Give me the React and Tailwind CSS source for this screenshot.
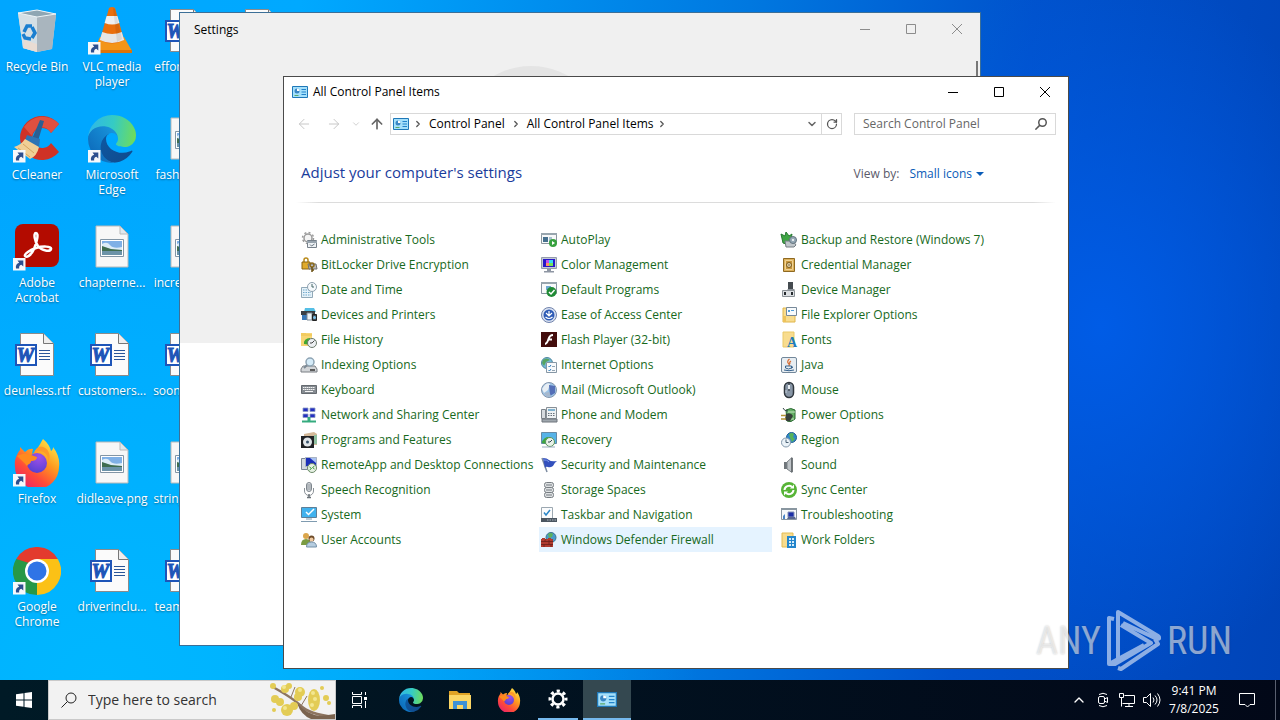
import {
    ArrowLeft,
    ArrowRight,
    ArrowUp,
    ChevronDown,
    ChevronRight,
    ChevronUp,
    RotateCw,
} from 'lucide-react';

/* ---------- Desktop icons (48x48) ---------- */

const Shortcut = () => (
    <g>
        <path d="M0 35h12.500v12.500H0z" fill="#f6f8fb" />
        <path
            d="M3 45.500c-.6-3 .6-5.200 3.200-5.800L4.500 37.500H10.300V43.500L8.300 41.800C6.500 42.300 5.900 43.600 6.200 45.500z"
            fill="#2d4f8f"
        />
    </g>
);

const RecycleBin = () => (
    <>
        <path d="M5 6 24 3l19 4-4 35-15 3-14-4z" fill="#c9d3da" />
        <path d="M5 6l19 3v36l-14-4z" fill="#d5dfe5" />
        <path d="M24 9l19-2-4 35-15 3z" fill="#a9b5be" />
        <path d="M5 6 24 3l19 4-19 3z" fill="#8fa6b3" stroke="#eef4f7" />
        <path d="M11 33l13 4v8l-14-4z" fill="#e9dcd3" />
        <g fill="none" stroke="#1b7fd0" strokeWidth="3.500">
            <path d="M11 25l3-6h5" />
            <path d="M19 20l3 6-3 5" />
            <path d="M18 32l-6-1-2-4" />
        </g>
    </>
);

const VlcCone = () => (
    <>
        <path d="M12 30h24l8 14-1 2H7l-1-2z" fill="#f39518" />
        <path d="M6 43h38v3H6z" fill="#dd7408" />
        <path d="M21 1q3-2 6 0l9 32q-12 7-24 0z" fill="#ea6f0c" />
        <path d="M18.600 9h10.800l2 7q-7 3-14.800 0z" fill="#efefef" />
        <path d="M14.200 25q10 4 19.600 0l2.400 8q-12 6-24.400 0z" fill="#e6e6e6" />
        <path d="M25 1l2 1 7 30-5 3z" fill="#000" opacity=".08" />
    </>
);

const CCleaner = () => (
    <>
        <path d="M46 9A22 22 0 1 0 46 37l-8-9a10 10 0 1 1 0-10z" fill="#cf3226" />
        <path d="M46 9A22 22 0 0 0 11 12l8 9a10 10 0 0 1 19-3z" fill="#e0503f" />
        <path d="M27 5l4 1-6 20-6-2z" fill="#2a5f93" />
        <path d="M14 20l13 4-1 9-14-8z" fill="#2d74b5" />
        <path d="M12 24l14 8q-2 9-9 12L1 32q7-2 11-8z" fill="#f0cf96" />
        <path d="M5 33l12 9M10 29l11 9" stroke="#d6a55f" />
    </>
);

const EdgeArt = () => (
    <g transform="scale(.1875)">
        <defs>
            <linearGradient id="edgeDark" x1="0" x2="1" y1="0" y2="1">
                <stop offset="0" stopColor="#0c59a4" />
                <stop offset="1" stopColor="#114a8b" />
            </linearGradient>
            <linearGradient id="edgeBlue" x1="1" x2="0" y1="0" y2="1">
                <stop offset="0" stopColor="#1b9de2" />
                <stop offset="1" stopColor="#0a62b4" />
            </linearGradient>
            <linearGradient id="edgeGreen" x1="0" x2="1" y1=".5" y2=".6">
                <stop offset="0" stopColor="#2fb7e8" />
                <stop offset=".5" stopColor="#35cbc4" />
                <stop offset="1" stopColor="#6fdc5a" />
            </linearGradient>
        </defs>
        <path
            fill="url(#edgeDark)"
            d="M231 190.500c-3.400 1.800-6.900 3.400-10.500 4.700a101.900 101.900 0 0 1-35.900 6.500c-47.300 0-88.500-32.500-88.500-74.300a31.500 31.500 0 0 1 16.400-27.300c-42.800 1.800-53.800 46.400-53.800 72.500 0 73.900 68.100 81.400 82.800 81.400 7.900 0 19.800-2.300 27-4.600l1.300-.4a128.300 128.300 0 0 0 66.600-52.800 4 4 0 0 0-5.400-5.700z"
        />
        <path
            fill="url(#edgeBlue)"
            d="M105.700 241.400a79.200 79.200 0 0 1-22.700-21.300 80.700 80.700 0 0 1 29.500-120c3.200-1.500 8.500-4.100 15.600-4a32.400 32.400 0 0 1 25.700 13 31.900 31.900 0 0 1 6.300 18.700c0-.2 24.500-79.600-80-79.600-43.900 0-80 41.600-80 78.200a130.200 130.200 0 0 0 12.100 56 128 128 0 0 0 156.400 67 75.500 75.500 0 0 1-62.800-8z"
        />
        <path
            fill="url(#edgeGreen)"
            d="M152.300 148.900c-.9 1-3.300 2.500-3.300 5.700 0 2.600 1.700 5.100 4.700 7.200 14.400 10 41.500 8.700 41.600 8.700 10.600 0 21.100-2.900 30.300-8.300a61.600 61.600 0 0 0 30.400-53.100c.3-22.400-8-37.300-11.300-43.900C223.500 23.900 177.700 0 128 0A128 128 0 0 0 0 126.200c.5-36.500 36.800-66 80-66 3.500 0 23.500.3 42 10.100 16.300 8.600 24.900 18.900 30.900 29.200 6.200 10.700 7.300 24.100 7.300 29.500 0 5.300-2.700 13.300-7.900 19.900z"
        />
    </g>
);

const Acrobat = () => (
    <>
        <rect x="2" y="1" width="44" height="43" rx="8" fill="#b30b00" />
        <path
            d="M23 10c-3 0-1 9 2 13 4 5 12 6 13 3s-9-3-15-1-12 6-11 8 6 0 9-7 5-16 2-16z"
            fill="none"
            stroke="#fff"
            strokeWidth="2.500"
        />
    </>
);

const ImageFile = () => (
    <>
        <path d="M8 3h24l8 8v33H8z" fill="#f7f7f7" stroke="#b9b9b9" />
        <path d="M32 3v8h8z" fill="#dfe8ee" stroke="#b9b9b9" />
        <path d="M12.500 16.500h23v17h-23z" fill="#fff" stroke="#8295a5" />
        <path d="M14 18h20v7H14z" fill="#7fb0e6" />
        <path d="M14 21q5-3 8 1t12 2v3H14z" fill="#dcecf7" />
        <path d="M14 23l9 3 11 1v2H14z" fill="#3f6d50" />
        <path d="M14 28h20v4H14z" fill="#6c93a8" />
    </>
);

const WordFile = () => (
    <>
        <path d="M7.500 2.500h23l10 10v32h-33z" fill="#fbfbfb" stroke="#8b8b8b" />
        <path d="M30.500 2.500v10h10" fill="#eee" stroke="#777" />
        <path d="M26 19.500h11M26 22.500h11M26 25.500h11M26 28.500h11" stroke="#2a5699" />
        <path d="M3 14h20v20H3z" fill="#fff" stroke="#1e55b8" strokeWidth="2" />
        <text
            x="12.500"
            y="31"
            fontSize="20"
            fontStyle="italic"
            fontWeight="700"
            textAnchor="middle"
            fill="#1e55b8"
            stroke="#1e55b8"
            className="font-['Liberation_Serif',serif]"
        >
            W
        </text>
    </>
);

const FirefoxArt = () => (
    <>
        <defs>
            <linearGradient id="ffBody" x1=".9" x2=".2" y1="0" y2="1">
                <stop offset="0" stopColor="#fff44f" />
                <stop offset=".4" stopColor="#ff9a1f" />
                <stop offset=".7" stopColor="#ff4b38" />
                <stop offset="1" stopColor="#e8206d" />
            </linearGradient>
            <radialGradient id="ffGlobe" cx=".6" cy=".2" r=".9">
                <stop offset="0" stopColor="#a050e8" />
                <stop offset="1" stopColor="#4f3fd0" />
            </radialGradient>
        </defs>
        <path
            d="M30 0c5 4 7 8 8 12 2-1 2-3 2-4 5 6 7 14 6 20a22 22 0 0 1-44 0C1 21 4 15 7 11v-3l5 5q4-4 8-3l-1 5c3-1 7-8 11-15z"
            fill="url(#ffBody)"
        />
        <circle cx="24" cy="24" r="10" fill="url(#ffGlobe)" />
        <path
            d="M4 17c5-3 11-2 14-1l6 2c0 3-3 4-6 4 0 3-3 3-4 5-3-4-7-7-10-10z"
            fill="#ff8a1d"
        />
        <path d="M21 13c8-3 15 2 14 10 4-6 0-14-5-15s-7 2-9 5z" fill="#ff9a2a" />
    </>
);

const ChromeArt = () => (
    <>
        <path d="M24 24 3.200 12A24 24 0 0 1 44.800 12z" fill="#e33b2e" />
        <path d="M24 24 44.800 12A24 24 0 0 1 24 48z" fill="#fbc116" />
        <path d="M24 24 24 48A24 24 0 0 1 3.200 12z" fill="#279847" />
        <path d="M24 12h20.800L34 30z" fill="#fbc116" />
        <path d="M24 48l10.400-18-10.400 6z" fill="#fbc116" />
        <path d="M3.200 12l10.400 18L16 16z" fill="#279847" />
        <circle cx="24" cy="24" r="12" fill="#fff" />
        <circle cx="24" cy="24" r="9.500" fill="#2f74e6" />
    </>
);

const desktopItems = [
    { label: 'Recycle Bin', Art: RecycleBin },
    { label: 'CCleaner', Art: CCleaner, shortcut: true },
    { label: 'Adobe Acrobat', Art: Acrobat, shortcut: true },
    { label: 'deunless.rtf', Art: WordFile },
    { label: 'Firefox', Art: FirefoxArt, shortcut: true },
    { label: 'Google Chrome', Art: ChromeArt, shortcut: true },
    { label: 'VLC media player', Art: VlcCone, shortcut: true },
    { label: 'Microsoft Edge', Art: EdgeArt, shortcut: true },
    { label: 'chapterne...', Art: ImageFile },
    { label: 'customers...', Art: WordFile },
    { label: 'didleave.png', Art: ImageFile },
    { label: 'driverinclu...', Art: WordFile },
    { label: 'effortma.rtf', Art: WordFile },
    { label: 'fashionpr...', Art: ImageFile },
    { label: 'increasein...', Art: ImageFile },
    { label: 'soonhow.rtf', Art: WordFile },
    { label: 'stringat.png', Art: ImageFile },
    { label: 'teambac.rtf', Art: WordFile },
    { label: 'younger.rtf', Art: WordFile },
];

/* ---------- Control panel icons (16x16) ---------- */

const glyphs = {
    admin: (
        <>
            <circle cx="7" cy="6" r="4" fill="#f4f4f4" stroke="#9a9a9a" strokeWidth="1.500" />
            <circle cx="7" cy="6" r="5.500" fill="none" stroke="#9a9a9a" strokeWidth="1.500" strokeDasharray="2 2.300" />
            <path d="M6.500 8.500h9v7h-9z" fill="#eef2f5" stroke="#76808a" />
            <path d="M6 9h10v2H6z" fill="#98a4ae" />
            <path d="M9 12.500l1.500 1.500 3-2" stroke="#6b7782" fill="none" />
        </>
    ),
    bitlocker: (
        <>
            <path d="M3 5V3a2 2 0 0 1 4 0v2" fill="none" stroke="#b98b1c" strokeWidth="1.500" />
            <path d="M1 5h8v7H1z" fill="#e0aa2a" stroke="#8a6410" />
            <path d="M7 7h8l1 5H8z" fill="#bcbcbc" stroke="#707070" />
            <circle cx="11" cy="8" r="2" fill="none" stroke="#8a6a1c" strokeWidth="1.500" />
            <path d="M11 10v5M11 13h2" stroke="#6b5012" strokeWidth="1.500" />
        </>
    ),
    date: (
        <>
            <path d="M.5 5.500h11v10H.5z" fill="#e6f2f9" stroke="#91a9b8" />
            <path d="M2 8h8M2 10.500h8M2 13h8" stroke="#6fa8cc" strokeDasharray="1.500 1" />
            <circle cx="11" cy="5" r="4.500" fill="#f5f9fc" stroke="#8da0ae" />
            <path d="M11 2v3h2" stroke="#466" fill="none" />
        </>
    ),
    devices: (
        <>
            <path d="M4 1h9l2 4H3z" fill="#55bfe6" />
            <path d="M0 4h14v4H0z" fill="#3a3f45" />
            <path d="M1 8h5v5H1z" fill="#3978b8" />
            <path d="M6 6h5v7H6z" fill="#eef3f7" stroke="#7e8b96" />
            <path d="M11.500 7.500h4v6h-4z" fill="#444a52" stroke="#222" />
            <circle cx="13.500" cy="10.500" r="1.500" fill="#7dc4ef" />
        </>
    ),
    history: (
        <>
            <path d="M0 1h11v13H0z" fill="#f7d675" />
            <path d="M0 1h5v1h6v2H0z" fill="#f2cb60" />
            <path d="M3 12a6 5 0 0 1 6-6v2.500a3 3 0 0 0-2 4z" fill="#42a832" />
            <circle cx="11" cy="11" r="4.500" fill="#eceff2" stroke="#6c7a6c" />
            <path d="M11 11l2.500-2.500M11 11H9" stroke="#444" />
        </>
    ),
    indexing: (
        <>
            <path d="M2 9h12l2 3v3H0v-3z" fill="#d2d5d8" stroke="#7a7f84" />
            <path d="M9 13h5" stroke="#333" strokeWidth="1.500" />
            <circle cx="9" cy="5" r="4" fill="#d5ebf8" stroke="#8ea4b4" strokeWidth="1.500" />
            <path d="M6 8l-3 3" stroke="#7c8a95" strokeWidth="2" />
        </>
    ),
    keyboard: (
        <>
            <path d="M.5 3.500h15v8H.5z" fill="#858b91" stroke="#666b70" />
            <path d="M2 5.500h12M2 7.500h12" stroke="#f4f4f4" strokeDasharray="1.500 .5" />
            <path d="M4 9.500h8" stroke="#f4f4f4" />
        </>
    ),
    network: (
        <>
            <g fill="#2430c0" stroke="#8c9ac4" strokeWidth=".8">
                <path d="M2 1h5v3.500H2zM9 1h5v3.500H9zM2 7h5v3.500H2zM9 7h5v3.500H9z" />
            </g>
            <path d="M8 10v4" stroke="#35ab7e" strokeWidth="3" />
            <path d="M1 14.500h14" stroke="#35ab7e" strokeWidth="2" />
        </>
    ),
    programs: (
        <>
            <path d="M3 2l10-2 3 2v11H3z" fill="#d3b898" />
            <path d="M13 3h3v9h-3z" fill="#8fc0a0" />
            <path d="M0 4h13v12H0z" fill="#202225" />
            <circle cx="6.500" cy="10" r="4.500" fill="#e1e6ea" />
            <circle cx="6.500" cy="10" r="1.500" fill="#38536d" />
        </>
    ),
    remote: (
        <>
            <path d="M.5 1.500h6v11h-6z" fill="#d2d8df" stroke="#7b8794" />
            <path d="M4.500.500h11v9h-11z" fill="#1b2fb8" stroke="#a9b4c4" />
            <path d="M9 1h6v5z" fill="#a9c2f2" />
            <circle cx="11" cy="11" r="4.500" fill="#e7f1e4" stroke="#6c8a68" />
            <path d="M8.500 10l2 1.500-2 1.500M13.500 9l-2 1.500 2 1.500" fill="none" stroke="#39983b" />
        </>
    ),
    speech: (
        <>
            <rect x="5.500" y=".5" width="5" height="9" rx="2.500" fill="#d9dde1" stroke="#7e868d" />
            <path d="M6 3h4M6 5h4M6 7h4" stroke="#8b9298" />
            <path d="M3.500 6v3a4 4 0 0 0 9 0V6" fill="none" stroke="#8b9298" />
            <path d="M8 12v3M6 15.500h4" stroke="#6c737a" strokeWidth="1.500" />
        </>
    ),
    system: (
        <>
            <path d="M.5.500h15v10H.5z" fill="#41b2ee" stroke="#5d7f98" />
            <path d="M5 5l2.500 2.500L13 2" fill="none" stroke="#fff" strokeWidth="1.500" />
            <path d="M5 12h6M0 14.500h16" stroke="#7f9bb0" />
        </>
    ),
    users: (
        <>
            <circle cx="5" cy="4" r="3" fill="#dba64c" />
            <path d="M0 13q0-6 5-6t5 6z" fill="#7a9b42" />
            <circle cx="10.500" cy="6.500" r="3" fill="#6f4c2a" />
            <circle cx="10.500" cy="7.500" r="2" fill="#efc9a0" />
            <path d="M5.500 15q0-5 5-5t5 5z" fill="#b6cde0" stroke="#7490a8" />
        </>
    ),
    autoplay: (
        <>
            <path d="M.5 1.500h15v10H.5z" fill="#f7f9fa" stroke="#8c979f" />
            <path d="M0 1h16v2H0z" fill="#98a5ae" />
            <path d="M2 5h5v5H2z" fill="#46708e" />
            <path d="M8 5h3v5H8z" fill="#a9c1cf" />
            <circle cx="12" cy="11" r="4" fill="#37a13e" />
            <path d="M11 9v4l3-2z" fill="#fff" />
        </>
    ),
    color: (
        <>
            <path d="M.5.500h15v11H.5z" fill="#c3cad6" stroke="#949cac" />
            <path d="M2 2h12v8H2z" fill="#2717c9" />
            <path d="M5 3h3v3H5z" fill="#c04fef" />
            <path d="M8 3h4v3H8z" fill="#38d9f2" />
            <path d="M5 6h3v3H5z" fill="#ff8f6b" />
            <path d="M8 6h4v3H8z" fill="#71e35a" />
            <path d="M6 12h4v2H6zM3 14h10v1.500H3z" fill="#8e96a3" />
        </>
    ),
    defaults: (
        <>
            <path d="M.5.500h15v11H.5z" fill="#f8fafb" stroke="#8795a0" />
            <path d="M0 0h16v2H0z" fill="#98a5ae" />
            <path d="M5 4h5v4H5z" fill="#6ea9d2" />
            <circle cx="10.500" cy="10" r="5" fill="#208b35" />
            <path d="M8 10l2 2 3.500-4" fill="none" stroke="#fff" strokeWidth="1.500" />
        </>
    ),
    ease: (
        <>
            <circle cx="8" cy="8" r="7.500" fill="#dbe3f2" stroke="#7183ac" />
            <circle cx="8" cy="8" r="5.500" fill="#2f5cb6" />
            <path d="M8 4v5M5 6l3 3 3-3M4.500 10q3.500 3 7 0" fill="none" stroke="#fff" strokeWidth="1.200" />
        </>
    ),
    flash: (
        <>
            <path d="M0 0h16v15H0z" fill="#430d0c" />
            <path d="M12 3C8 3 8 6 7 8.500S5.500 12 4 12M7.500 7.500H11" fill="none" stroke="#fff" strokeWidth="2" />
        </>
    ),
    internet: (
        <>
            <circle cx="6" cy="6" r="5.500" fill="#74b7d8" stroke="#50889f" />
            <path d="M2 3q4-3 7 0l-4 2-2 4-2-3z" fill="#58a560" />
            <path d="M5.500 5.500h10v10h-10z" fill="#f8fafc" stroke="#8697a5" />
            <path d="M7.500 9l1 1 1.500-2M7.500 13l1 1 1.500-2" fill="none" stroke="#2b7cbf" />
            <path d="M11 9.500h3M11 13.500h3" stroke="#93a4b1" />
        </>
    ),
    mail: (
        <>
            <circle cx="8" cy="8" r="7.500" fill="#9cc4e6" stroke="#8495ac" />
            <path d="M3 4q3-4 6-2l-2 6-4 3-2-4z" fill="#e8eef4" />
            <path d="M8 3l6 1v7l-5 3z" fill="#546fb7" />
            <path d="M3 11l5-1 2 4-4 1z" fill="#a7b8cd" />
        </>
    ),
    phone: (
        <>
            <path d="M.5 2.500h4v9h-4z" fill="#d6dade" stroke="#7c838a" />
            <path d="M5.500.500h10v11h-10z" fill="#eef1f3" stroke="#878f96" />
            <path d="M7 2h7v2H7z" fill="#80b2cf" />
            <path d="M7 6.500h7M7 8.500h7" stroke="#67707a" strokeDasharray="1.500 1" />
            <path d="M1 12h15v3H1z" fill="#9fa7ae" stroke="#6e757c" />
        </>
    ),
    recovery: (
        <>
            <path d="M.5.500h15v11H.5z" fill="#56b3e8" stroke="#668aa5" />
            <path d="M1 11a7 6 0 0 1 8-6v2a4 4 0 0 0-3 5z" fill="#3fa63e" />
            <circle cx="9" cy="10" r="4.500" fill="#e9f2e8" stroke="#58945a" />
            <path d="M9 10l2-2M9 10H7" stroke="#345" />
            <path d="M1 15h13" stroke="#9ab" />
        </>
    ),
    security: (
        <>
            <path d="M1 1l5 14" stroke="#7b8aa0" strokeWidth="1.500" />
            <path d="M2 1q4 0 6 2t8 1q-3 2-4 5-3 2-5 1t-3 1z" fill="#3350bd" />
            <path d="M3 3q3-.5 5 2" stroke="#7e9bea" fill="none" />
        </>
    ),
    storage: (
        <g fill="#dde0e2" stroke="#777d82">
            <rect x="3.500" y="10.500" width="9" height="5" rx="2" />
            <rect x="3.500" y="5.500" width="9" height="5" rx="2" />
            <rect x="3.500" y=".5" width="9" height="5" rx="2" />
            <path d="M5 3h6M5 8h6M5 13h6" />
        </g>
    ),
    taskbar: (
        <>
            <path d="M.5.500h11v12H.5z" fill="#fbfcfd" stroke="#9ca8b1" />
            <path d="M3 5.500l2 2.500 4-5" fill="none" stroke="#2a86c8" strokeWidth="1.500" />
            <path d="M0 11h16v4H0z" fill="#4b5661" />
            <path d="M6 13h9" stroke="#aeb8c1" strokeDasharray="1.500 1" />
        </>
    ),
    firewall: (
        <>
            <circle cx="10" cy="5.500" r="5" fill="#479bcd" stroke="#3c7391" />
            <path d="M7 2q3-2 5 0l-1 3-3 1z" fill="#5cb15f" />
            <path d="M0 7h12v8H0z" fill="#b03b30" />
            <path d="M0 9.500h12M0 12.500h12M4 7v2.500M8 9.500v3M3 12.500V15M10 12.500V15M8 7v2" stroke="#6a201b" strokeWidth=".8" />
            <path d="M1 6h3v2H1zM7 6h3v2H7z" fill="#b03b30" />
        </>
    ),
    backup: (
        <>
            <path d="M0 2l4 2 1-4 3 4 3-2-1 5 3 3-5 3-6-2z" fill="#3fa544" stroke="#277a31" />
            <path d="M4 9h8l3 4-2 2H5z" fill="#c1c7cb" stroke="#757c82" />
            <circle cx="12" cy="8" r="3.500" fill="#96a9b6" stroke="#64747f" />
            <circle cx="12" cy="8" r="1" fill="#fff" />
        </>
    ),
    credential: (
        <>
            <path d="M2.500 1.500h11v13h-11z" fill="#ddb15b" stroke="#8f6921" />
            <path d="M4.500 3.500h7v9h-7z" fill="#c8963d" stroke="#f0d395" />
            <circle cx="8" cy="8" r="2.500" fill="#ead7a7" stroke="#77591f" />
            <circle cx="8" cy="8" r=".8" fill="#654" />
        </>
    ),
    device: (
        <>
            <path d="M7 0h5v7H7z" fill="#454b50" />
            <path d="M7 7h6l1 1H6z" fill="#899097" />
            <path d="M1.500 8.500h12v6h-12z" fill="#dde0e3" stroke="#8c9297" />
            <path d="M4 10v3M11 10v3" stroke="#252a2e" strokeWidth="2" />
        </>
    ),
    explorer: (
        <>
            <path d="M2 1h12v14H2z" fill="#f8dc8e" stroke="#e0b64c" />
            <path d="M5.500.500h10v8h-10z" fill="#f8fbfd" stroke="#77899a" />
            <path d="M7 3h2v2H7zM10 3h3v1h-3z" fill="#529dd6" />
            <path d="M2 9h3v6H2z" fill="#eec35a" />
        </>
    ),
    fonts: (
        <>
            <path d="M2 0h11v15H2z" fill="#f8dc8e" stroke="#eac968" />
            <text x="11" y="15" fontSize="14" fontWeight="700" textAnchor="middle" fill="#217cb9" className="font-['Liberation_Serif',serif]">
                A
            </text>
        </>
    ),
    java: (
        <>
            <rect x=".5" y=".5" width="15" height="15" rx="1.500" fill="#e7edf2" stroke="#72879a" />
            <path d="M8.500 2q-3 2.500-1 4.500t0 2M10 4q-2 1-1 3" fill="none" stroke="#d66d34" strokeWidth="1.200" />
            <path d="M4.500 9h6v2q-3 2-6 0zM10.500 9.500q2.500 0 0 2M3 13q5 1.500 10 0" fill="none" stroke="#36628d" />
        </>
    ),
    mouse: (
        <>
            <rect x="3.500" y=".5" width="9" height="15" rx="4.500" fill="#8896a6" stroke="#2f363d" strokeWidth="1.500" />
            <path d="M8 1v8" stroke="#272d33" />
            <path d="M8 3v4" stroke="#e8eef3" strokeWidth="2" />
            <path d="M5 8v3" stroke="#c3ced8" />
        </>
    ),
    power: (
        <>
            <path d="M5 3q5-3 9 0v9q-4 4-8 2z" fill="#66b067" stroke="#2c6a33" />
            <path d="M7 5h7M7 12h6" stroke="#c4e6c1" />
            <path d="M5 7q5-2 7 2l-3 5q-4 1-5-2z" fill="#36403a" />
            <path d="M0 8.500h5M0 12h5" stroke="#b29336" strokeWidth="1.500" />
            <path d="M2 1q1 3 5 3" fill="none" stroke="#344" />
        </>
    ),
    region: (
        <>
            <circle cx="10.500" cy="5.500" r="5" fill="#3088cb" stroke="#1f5e94" />
            <path d="M8 2q3-2 5 0l-1 3 2 2-3 3-2-4z" fill="#58b35a" />
            <circle cx="5" cy="10.500" r="4.500" fill="#eaf2f8" stroke="#8297aa" />
            <path d="M5 7.500v3h2.500" fill="none" stroke="#4a6074" />
        </>
    ),
    sound: (
        <>
            <path d="M3 5h3v7H3z" fill="#6f757a" />
            <path d="M6 5l5-4.500v15L6 12z" fill="#bfc4c8" stroke="#7d8388" />
            <path d="M11 1v14" stroke="#5b6065" strokeWidth="1.500" />
        </>
    ),
    sync: (
        <>
            <circle cx="8" cy="8" r="8" fill="#57b437" />
            <path d="M3.500 8a4.500 4.500 0 0 1 7.500-3M12.500 8A4.500 4.500 0 0 1 5 11" fill="none" stroke="#fff" strokeWidth="2" />
            <path d="M9 6.500h4v-4zM7 9.500H3v4z" fill="#fff" />
        </>
    ),
    trouble: (
        <>
            <path d="M.5 2.500h15v10H.5z" fill="#f7f9fa" stroke="#8996a0" />
            <path d="M0 1h16v2H0z" fill="#8996a0" />
            <path d="M2 9l2-2v5H2z" fill="#4b85c6" />
            <path d="M7 5h6v5H7z" fill="#1c2fa7" stroke="#8291b8" />
            <path d="M6 12h9l-1-2H7z" fill="#596790" />
        </>
    ),
    work: (
        <>
            <path d="M1 1h11v14H1z" fill="#f8dc8e" stroke="#e4bc55" />
            <path d="M6 4h9v12H6z" fill="#2485cb" />
            <path d="M8 6h2v2H8zM11 6h2v2h-2zM8 9h2v2H8zM11 9h2v2h-2zM8 12h2v2H8zM11 12h2v2h-2z" fill="#d7edfa" />
        </>
    ),
};

const panelItems = [
    ['Administrative Tools', 'admin'],
    ['AutoPlay', 'autoplay'],
    ['Backup and Restore (Windows 7)', 'backup'],
    ['BitLocker Drive Encryption', 'bitlocker'],
    ['Color Management', 'color'],
    ['Credential Manager', 'credential'],
    ['Date and Time', 'date'],
    ['Default Programs', 'defaults'],
    ['Device Manager', 'device'],
    ['Devices and Printers', 'devices'],
    ['Ease of Access Center', 'ease'],
    ['File Explorer Options', 'explorer'],
    ['File History', 'history'],
    ['Flash Player (32-bit)', 'flash'],
    ['Fonts', 'fonts'],
    ['Indexing Options', 'indexing'],
    ['Internet Options', 'internet'],
    ['Java', 'java'],
    ['Keyboard', 'keyboard'],
    ['Mail (Microsoft Outlook)', 'mail'],
    ['Mouse', 'mouse'],
    ['Network and Sharing Center', 'network'],
    ['Phone and Modem', 'phone'],
    ['Power Options', 'power'],
    ['Programs and Features', 'programs'],
    ['Recovery', 'recovery'],
    ['Region', 'region'],
    ['RemoteApp and Desktop Connections', 'remote'],
    ['Security and Maintenance', 'security'],
    ['Sound', 'sound'],
    ['Speech Recognition', 'speech'],
    ['Storage Spaces', 'storage'],
    ['Sync Center', 'sync'],
    ['System', 'system'],
    ['Taskbar and Navigation', 'taskbar'],
    ['Troubleshooting', 'trouble'],
    ['User Accounts', 'users'],
    ['Windows Defender Firewall', 'firewall'],
    ['Work Folders', 'work'],
];

const PanelIcon = ({ className }) => (
    <svg viewBox="0 0 16 12" className={className}>
        <path d="M.5.500h15v11H.5z" fill="#a5e0fb" stroke="#1f78b8" />
        <circle cx="5" cy="5" r="2.500" fill="#3a86c4" />
        <path d="M5 5V2.500A2.500 2.500 0 0 1 7.500 5z" fill="#fff" />
        <path d="M9.500 3.500H14M9.500 6H14M9.500 8.500H14" stroke="#2383cb" />
        <path d="M2.500 9.500h4" stroke="#58a868" />
    </svg>
);

const Magnifier = ({ className }) => (
    <svg viewBox="0 0 16 16" fill="none" stroke="currentColor" className={className}>
        <circle cx="10" cy="6" r="5" />
        <path d="M6.500 9.500.5 15.500" />
    </svg>
);

const CaptionButtons = ({ className }) => (
    <div className={`flex ${className}`}>
        <button aria-label="Minimize" className="flex w-[46px] items-center justify-center">
            <svg viewBox="0 0 10 10" className="size-2.5" stroke="currentColor" fill="none">
                <path d="M0 5.500h10" />
            </svg>
        </button>
        <button aria-label="Maximize" className="flex w-[46px] items-center justify-center">
            <svg viewBox="0 0 10 10" className="size-2.5" stroke="currentColor" fill="none">
                <path d="M.5.500h9v9h-9z" />
            </svg>
        </button>
        <button aria-label="Close" className="flex w-[46px] items-center justify-center">
            <svg viewBox="0 0 10 10" className="size-2.5" stroke="currentColor" fill="none">
                <path d="M0 0l10 10M10 0 0 10" />
            </svg>
        </button>
    </div>
);

const Desktop = () => (
    <ul className="grid h-[648px] w-max auto-cols-[75px] grid-flow-col grid-rows-6">
        {desktopItems.map(({ label, Art, shortcut }) => (
            <li key={label} className="flex flex-col items-center pt-[7px] pr-px text-center text-xs leading-[15px] text-white">
                <svg viewBox="0 0 48 48" className="mb-1 size-12 shrink-0">
                    <Art />
                    {shortcut && <Shortcut />}
                </svg>
                <span className="px-1 [text-shadow:0_1px_2px_rgba(0,0,0,0.4)]">{label}</span>
            </li>
        ))}
    </ul>
);

const SettingsWindow = () => (
    <section className="absolute top-3 left-[179px] flex h-[634px] w-[802px] flex-col border border-[#3c6f97] bg-white">
        <div className="relative h-[330px] bg-[#f0f0f0]">
            <header className="flex h-8 justify-between pl-3.5">
                <h2 className="self-center pt-0.5 text-xs text-black">Settings</h2>
                <CaptionButtons className="text-[#8c8c8c]" />
            </header>
            <div className="mt-[21px] mr-[374px] ml-auto size-[150px] rounded-full bg-[#e4e4e4]" />
            <div className="absolute top-12 right-0.5 h-40 w-0.5 bg-[#777]" />
        </div>
    </section>
);

const AddressBar = () => (
    <div className="mt-1.5 flex h-6 items-center px-3 text-xs">
        <button aria-label="Back" className="flex w-4 justify-center text-[#c8c8c8]">
            <ArrowLeft className="size-4" strokeWidth={1.5} />
        </button>
        <button aria-label="Forward" className="ml-3.5 flex w-4 justify-center text-[#c8c8c8]">
            <ArrowRight className="size-4" strokeWidth={1.5} />
        </button>
        <button aria-label="Recent locations" className="ml-2 flex w-3 justify-center text-[#c8c8c8]">
            <ChevronDown className="size-2.5" />
        </button>
        <button aria-label="Up" className="ml-[7px] flex w-4 justify-center text-[#666]">
            <ArrowUp className="size-4" strokeWidth={2.5} />
        </button>
        <nav className="ml-[5px] flex h-[22px] flex-1 items-center border border-[#d9d9d9]">
            <PanelIcon className="ml-0.5 h-3 w-4" />
            <ChevronRight className="mx-1 size-2.5 text-[#555]" strokeWidth={3} />
            <button className="px-0.5">Control Panel</button>
            <ChevronRight className="mx-1 size-2.5 text-[#555]" strokeWidth={3} />
            <button className="px-0.5">All Control Panel Items</button>
            <ChevronRight className="mx-0.5 size-2.5 text-[#555]" strokeWidth={3} />
            <button aria-label="Previous locations" className="ml-auto px-[3px]">
                <ChevronDown className="size-3 text-[#666]" strokeWidth={3} />
            </button>
            <button aria-label="Refresh" className="flex h-full w-5 items-center justify-center border-l border-[#d9d9d9]">
                <RotateCw className="size-3 text-[#555]" strokeWidth={2.5} />
            </button>
        </nav>
        <label className="ml-3 flex h-[22px] w-[202px] items-center border border-[#d9d9d9] px-2">
            <input
                type="search"
                aria-label="Search Control Panel"
                placeholder="Search Control Panel"
                className="w-full min-w-0 outline-none placeholder:text-[#666]"
            />
            <Magnifier className="size-3 shrink-0 stroke-2 text-[#555]" />
        </label>
    </div>
);

const ControlPanelWindow = () => (
    <section className="absolute top-[76px] left-[283px] flex h-[593px] w-[786px] flex-col border border-[#4a4a4a] bg-white">
        <header className="flex h-[29px] items-stretch">
            <div className="flex items-center gap-[5px] pl-2">
                <PanelIcon className="h-3 w-4" />
                <h2 className="text-xs text-black">All Control Panel Items</h2>
            </div>
            <CaptionButtons className="ml-auto text-black" />
        </header>
        <AddressBar />
        <div className="flex items-center justify-between pt-6 pr-[84px] pl-[17px]">
            <h1 className="text-[15px] leading-6 text-[#1a3c9c]">Adjust your computer's settings</h1>
            <div className="flex items-center pt-1 text-xs">
                <span className="text-[#5a5a6a]">View by:</span>
                <button className="ml-2.5 flex items-center gap-1 text-[#0a5cb8]">
                    Small icons
                    <svg viewBox="0 0 8 4" className="h-1 w-2">
                        <path d="M0 0h8L4 4z" fill="currentColor" />
                    </svg>
                </button>
            </div>
        </div>
        <div className="mx-3 mt-[18px] h-px bg-[linear-gradient(to_right,transparent,#dcdcdc_3%,#dcdcdc_97%,transparent)]" />
        <ul className="grid grid-cols-[repeat(3,233px)] gap-x-[7px] pt-6 pl-[15px]">
            {panelItems.map(([label, icon]) => (
                <li key={label} className={label === 'Windows Defender Firewall' ? 'bg-[#e5f3ff]' : ''}>
                    <a href="#" className="flex h-[25px] items-center gap-1 pl-0.5 text-xs whitespace-nowrap text-[#17691c]">
                        <svg viewBox="0 0 16 16" className="size-4 shrink-0 overflow-visible">
                            {glyphs[icon]}
                        </svg>
                        {label}
                    </a>
                </li>
            ))}
        </ul>
    </section>
);

const Watermark = () => (
    <div className="pointer-events-none absolute right-12 bottom-2 flex items-center gap-1.5 font-['Roboto_Condensed','Open_Sans_Condensed','Liberation_Sans_Narrow',sans-serif] text-[38px] leading-none text-white/55 [text-shadow:0_0_2px_rgba(0,0,0,0.25)]">
        <span>ANY</span>
        <svg viewBox="0 0 54 62" className="h-[62px] w-[54px]" fill="none" stroke="currentColor" strokeWidth="4" strokeLinejoin="round">
            <path d="M7 9 2 8v46L37 35M11 49V2l40 24q3 3-1 3L16 13M2 54l6 0L44 33l-30-18M11 58l3 1 37-25-3-5" />
        </svg>
        <span>RUN</span>
    </div>
);

const TaskButton = ({ label, width = 'w-12', className = '', children }) => (
    <button aria-label={label} className={`flex h-full items-center justify-center ${width} ${className}`}>
        {children}
    </button>
);

const Taskbar = () => (
    <footer className="flex h-10 shrink-0 items-stretch bg-linear-to-r from-[#001a26] to-[#020818] text-white">
        <TaskButton label="Start">
            <svg viewBox="0 0 16 16" className="size-4" fill="currentColor">
                <path d="M0 2.200 7.500 1.200v6.300H0zM8.500 1 16 0v7.500H8.500zM0 8.500h7.500v6.300L0 13.800zM8.500 8.500H16V16l-7.500-1z" />
            </svg>
        </TaskButton>
        <label className="flex w-72 items-center overflow-hidden border border-[#c9c9c9] bg-[#f2f2f2] pl-3 text-[#222]">
            <Magnifier className="mr-[11px] size-4 shrink-0" />
            <input
                type="search"
                aria-label="Type here to search"
                placeholder="Type here to search"
                className="min-w-0 flex-1 text-sm outline-none placeholder:text-[#333]"
            />
            <svg viewBox="0 0 66 38" className="h-[38px] w-[66px] shrink-0">
                <path d="M2 5q22 12 30 20t32 11" fill="none" stroke="#8d7560" strokeWidth="2.500" />
                <path d="M28 22q10 12 24 13l14-2v5H42q-10-4-14-16z" fill="#7b644f" />
                <path d="M22 16l4-10M32 25l6-10" stroke="#8d7560" />
                <g fill="#e3cc55">
                    <circle cx="6" cy="18" r="4" />
                    <circle cx="11" cy="21" r="4" />
                    <circle cx="16" cy="8" r="4" />
                    <circle cx="20" cy="5" r="3" />
                    <circle cx="31" cy="11" r="5" />
                    <circle cx="29" cy="16" r="4" />
                    <circle cx="18" cy="29" r="6" />
                    <circle cx="25" cy="25" r="4" />
                    <ellipse cx="45" cy="19" rx="6" ry="11" />
                    <circle cx="4" cy="5" r="3" />
                    <circle cx="57" cy="17" r="3" />
                    <circle cx="60" cy="22" r="2" />
                    <circle cx="53" cy="7" r="2" />
                    <circle cx="5" cy="29" r="2" />
                </g>
                <g fill="#f3e78f">
                    <circle cx="15" cy="6" r="2" />
                    <circle cx="31" cy="9" r="2" />
                    <circle cx="16" cy="27" r="2" />
                    <circle cx="44" cy="12" r="2" />
                    <circle cx="46" cy="18" r="2" />
                    <circle cx="43" cy="24" r="2" />
                </g>
            </svg>
        </label>
        <div className="flex gap-px">
            <TaskButton label="Task View" className="mr-0.5">
                <svg viewBox="0 0 16 16" className="size-4" fill="none" stroke="currentColor">
                    <path d="M.5 0v2.500h9V0M.5 4.500h9v7h-9zM.5 16v-2.500h9V16M13.500 0v3M13.500 9v7" />
                    <path d="M12 5h3v3h-3z" fill="currentColor" stroke="none" />
                </svg>
            </TaskButton>
            <TaskButton label="Microsoft Edge">
                <svg viewBox="0 0 48 48" className="size-6">
                    <EdgeArt />
                </svg>
            </TaskButton>
            <TaskButton label="File Explorer">
                <svg viewBox="0 0 22 20" className="h-5 w-[22px]">
                    <path d="M0 1h8l2 2h11v4H0z" fill="#e0a325" />
                    <path d="M0 5h22v14H0z" fill="#fbd665" />
                    <path d="M4 11h14v8h-4v-4H8v4H4z" fill="#3e91d6" />
                </svg>
            </TaskButton>
            <TaskButton label="Firefox">
                <svg viewBox="0 0 48 48" className="size-6">
                    <FirefoxArt />
                </svg>
            </TaskButton>
            <TaskButton label="Settings" width="w-10" className="mx-1 border-b-2 border-[#76b9ed]">
                <svg viewBox="0 0 20 20" className="size-5" fill="none" stroke="currentColor">
                    <circle cx="10" cy="10" r="5.500" strokeWidth="2.500" />
                    <circle cx="10" cy="10" r="8" strokeWidth="3" strokeDasharray="3.140 3.140" strokeDashoffset="1.570" />
                </svg>
            </TaskButton>
            <TaskButton label="All Control Panel Items" className="border-b-2 border-[#76b9ed] bg-[#344850]">
                <PanelIcon className="h-[15px] w-5" />
            </TaskButton>
        </div>
        <div className="ml-auto flex items-center">
            <button aria-label="Show hidden icons" className="px-1">
                <ChevronUp className="size-4" strokeWidth={2} />
            </button>
            <button aria-label="Meet Now" className="px-1">
                <svg viewBox="0 0 16 16" className="size-4" fill="none" stroke="currentColor">
                    <rect x="3.500" y="4.500" width="6" height="7" rx="1.500" />
                    <path d="M9.500 7l3-1.500v5L9.500 9M4 2.500q4-2.500 8 0M4 13.500q4 2.500 8 0" />
                </svg>
            </button>
            <button aria-label="Network" className="px-1">
                <svg viewBox="0 0 16 16" className="size-4" fill="none" stroke="currentColor">
                    <path d="M5.500 3.500h10v8H3.500M10 11.500v3M6 14.500h8M.5 1.500h4v4h-4zM2.500 5.500v9" />
                </svg>
            </button>
            <button aria-label="Volume" className="px-1">
                <svg viewBox="0 0 18 16" className="h-4 w-[18px]" fill="none" stroke="currentColor">
                    <path d="M.5 5.500h3l4-4v13l-4-4h-3zM10 5.500q2 2.500 0 5M12 3.500q4 4.500 0 9M14.500 1.500q5 6.500 0 13" />
                </svg>
            </button>
            <button className="w-[58px] text-center text-xs leading-[18px]">
                <time className="block">9:41 PM</time>
                <time className="block">7/8/2025</time>
            </button>
            <button aria-label="Notifications" className="px-4">
                <svg viewBox="0 0 16 16" className="size-4" fill="none" stroke="currentColor">
                    <path d="M.5 1.500h15v11H11L8.500 15 6 12.500H.5z" />
                </svg>
            </button>
            <button aria-label="Show desktop" className="ml-1 h-full w-[5px] border-l border-[#5a6070]" />
        </div>
    </footer>
);

const App = () => (
    <div className="flex h-screen flex-col overflow-hidden font-['Open_Sans','Noto_Sans',sans-serif]">
        <main className="relative min-h-0 flex-1 bg-[radial-gradient(ellipse_280px_360px_at_86%_48%,#005ce6,transparent),radial-gradient(ellipse_600px_500px_at_8%_100%,#00b7ff,transparent),linear-gradient(97deg,#00a6ff_0%,#00a9ff_22%,#0078e0_55%,#0052cc_76%,#0044b8_100%)]">
            <Desktop />
            <SettingsWindow />
            <ControlPanelWindow />
            <Watermark />
        </main>
        <Taskbar />
    </div>
);

export default App;
